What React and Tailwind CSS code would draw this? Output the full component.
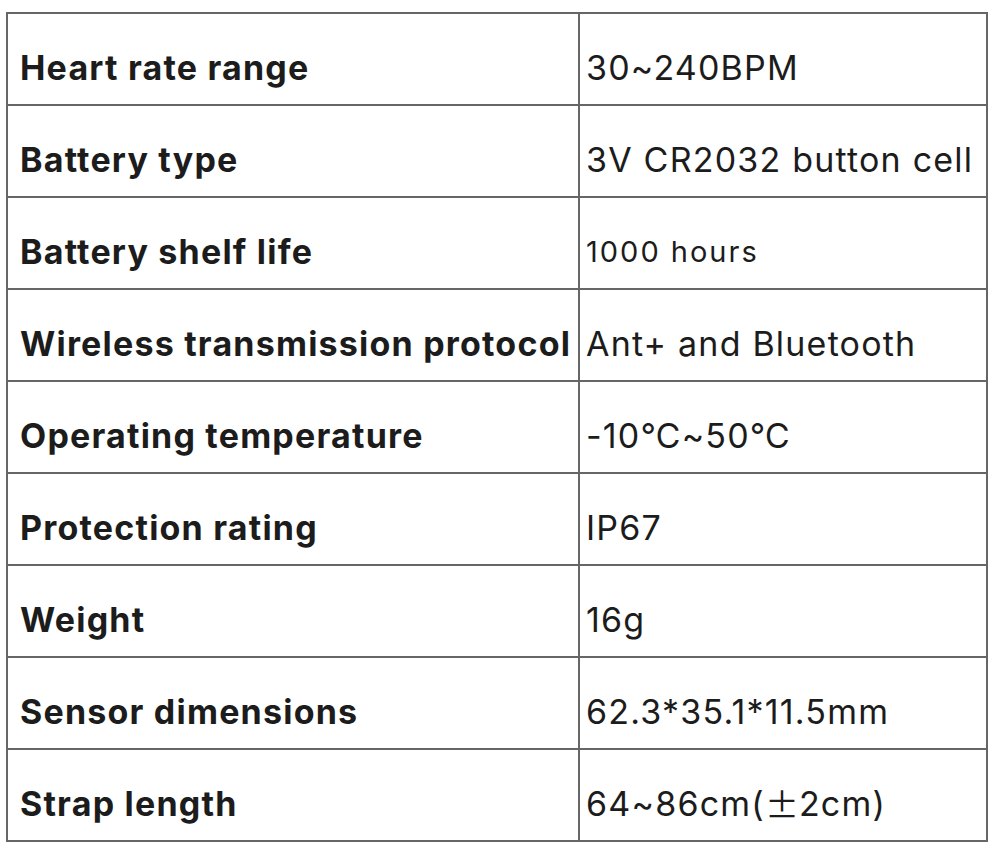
const specs = [
  { label: "Heart rate range", value: "30~240BPM" },
  { label: "Battery type", value: "3V CR2032 button cell" },
  { label: "Battery shelf life", value: "1000 hours", small: true },
  { label: "Wireless transmission protocol", value: "Ant+ and Bluetooth" },
  { label: "Operating temperature", value: "-10℃~50℃" },
  { label: "Protection rating", value: "IP67" },
  { label: "Weight", value: "16g" },
  { label: "Sensor dimensions", value: "62.3*35.1*11.5mm" },
  {
    label: "Strap length",
    value: (
      <>
        64~86cm(
        <span className="font-['Noto_Sans_CJK_SC',sans-serif] tracking-normal">±</span>
        2cm)
      </>
    ),
  },
];

export default function App() {
  return (
    <div className="min-h-[852px] w-[996px] bg-white pl-[6px] pt-[12px] font-['Inter','Noto_Sans',sans-serif] text-[#1c1c1c]">
      <div className="w-[982px] border-x-2 border-b-2 border-[#666]">
        {specs.map((row) => (
          <div
            key={row.label}
            className="grid h-[92px] grid-cols-[572px_1fr] border-t-2 border-[#666]"
          >
            <div className="flex items-end whitespace-nowrap border-r-2 border-[#666] pb-[16px] pl-[12px] text-[34px] font-bold leading-[40px] tracking-[1.2px]">
              {row.label}
            </div>
            <div
              className={`flex items-end whitespace-nowrap pb-[16px] pl-[6px] leading-[40px] ${
                row.small ? "text-[29px] tracking-[2px]" : "text-[34px] tracking-[1.2px]"
              }`}
            >
              {row.value}
            </div>
          </div>
        ))}
      </div>
    </div>
  );
}
